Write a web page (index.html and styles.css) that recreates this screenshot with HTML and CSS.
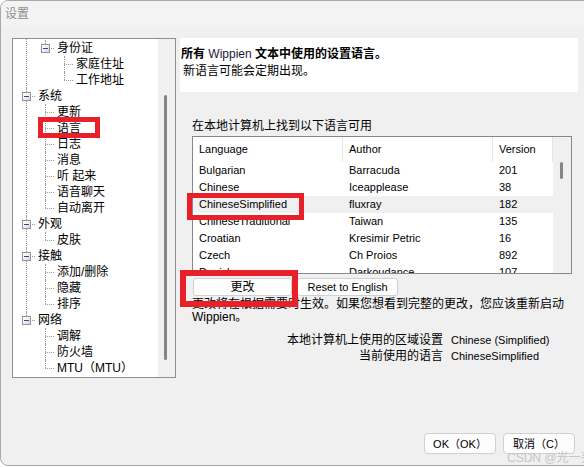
FILE: index.html
```html
<!DOCTYPE html>
<html lang="zh-CN">
<head>
<meta charset="utf-8">
<title>设置</title>
<link rel="stylesheet" href="styles.css">
</head>
<body>
<div class="window">
  <div class="titlebar"><span class="title">设置</span></div>
  <div class="main">
    <div class="tree">
      <div class="tree-view">
        <ul class="tree-root">
          <li class="node">
            <div class="row"><span class="exp"></span></div>
            <ul class="sub">
              <li class="node last">
                <div class="row"><span class="exp"></span><span class="label">身份证</span></div>
                <ul class="sub">
                  <li><div class="row"><span class="label">家庭住址</span></div></li>
                  <li class="last"><div class="row"><span class="label">工作地址</span></div></li>
                </ul>
              </li>
            </ul>
          </li>
          <li class="node">
            <div class="row"><span class="exp"></span><span class="label">系统</span></div>
            <ul class="sub">
              <li><div class="row"><span class="label">更新</span></div></li>
              <li><div class="row"><span class="label">语言</span></div></li>
              <li><div class="row"><span class="label">日志</span></div></li>
              <li><div class="row"><span class="label">消息</span></div></li>
              <li><div class="row"><span class="label">听 起来</span></div></li>
              <li><div class="row"><span class="label">语音聊天</span></div></li>
              <li class="last"><div class="row"><span class="label">自动离开</span></div></li>
            </ul>
          </li>
          <li class="node">
            <div class="row"><span class="exp"></span><span class="label">外观</span></div>
            <ul class="sub">
              <li class="last"><div class="row"><span class="label">皮肤</span></div></li>
            </ul>
          </li>
          <li class="node">
            <div class="row"><span class="exp"></span><span class="label">接触</span></div>
            <ul class="sub">
              <li><div class="row"><span class="label">添加/删除</span></div></li>
              <li><div class="row"><span class="label">隐藏</span></div></li>
              <li class="last"><div class="row"><span class="label">排序</span></div></li>
            </ul>
          </li>
          <li class="node last">
            <div class="row"><span class="exp"></span><span class="label">网络</span></div>
            <ul class="sub">
              <li><div class="row"><span class="label">调解</span></div></li>
              <li><div class="row"><span class="label">防火墙</span></div></li>
              <li class="last"><div class="row"><span class="label">MTU（MTU）</span></div></li>
            </ul>
          </li>
        </ul>
      </div>
      <div class="tree-scroll"><div class="tree-thumb"></div></div>
    </div>

    <div class="panel">
      <div class="banner">
        <div class="banner-title">所有 <span class="latin">Wippien</span> 文本中使用的设置语言。</div>
        <div class="banner-sub">新语言可能会定期出现。</div>
      </div>
      <div class="caption">在本地计算机上找到以下语言可用</div>
      <div class="listview">
        <div class="lv-body">
          <div class="lv-head"><div>Language</div><div>Author</div><div>Version</div></div>
          <div class="lv-row"><div>Bulgarian</div><div>Barracuda</div><div>201</div></div>
          <div class="lv-row"><div>Chinese</div><div>Iceapplease</div><div>38</div></div>
          <div class="lv-row sel"><div>ChineseSimplified</div><div>fluxray</div><div>182</div></div>
          <div class="lv-row"><div>ChineseTraditional</div><div>Taiwan</div><div>135</div></div>
          <div class="lv-row"><div>Croatian</div><div>Kresimir Petric</div><div>16</div></div>
          <div class="lv-row"><div>Czech</div><div>Ch Proios</div><div>892</div></div>
          <div class="lv-row"><div>Danish</div><div>Darkoudance</div><div>107</div></div>
        </div>
        <div class="lv-scroll"><div class="lv-thumb"></div></div>
      </div>
      <div class="actions">
        <button class="btn btn-change">更改</button>
        <button class="btn btn-reset">Reset to English</button>
      </div>
      <p class="note">更改将在根据需要时生效。如果您想看到完整的更改，您应该重新启动Wippien。</p>
      <div class="locale">
        <div class="lk">本地计算机上使用的区域设置</div><div class="lv">Chinese (Simplified)</div>
        <div class="lk">当前使用的语言</div><div class="lv">ChineseSimplified</div>
      </div>
    </div>
  </div>
  <div class="footer">
    <button class="btn dlg">OK（OK）</button>
    <button class="btn dlg">取消（C）</button>
  </div>

  <div class="mark mark-tree"></div>
  <div class="mark mark-row"></div>
  <div class="mark mark-btn"></div>
  <div class="watermark">CSDN @光一亮</div>
</div>
</body>
</html>
```

FILE: styles.css
```css
* { box-sizing: border-box; }

html, body {
  margin: 0;
  padding: 0;
  overflow: hidden;
}

body {
  background: #ffffff;
  font-family: "Liberation Sans", "Noto Sans CJK SC", sans-serif;
  font-size: 12px;
  color: #000;
  width: 584px;
  height: 467px;
}

.window {
  position: relative;
  width: 586px;
  height: 466px;
  border: 1px solid #a9a9a9;
  border-radius: 8px 0 0 8px;
  background: #f0f0f0;
  display: flex;
  flex-direction: column;
  overflow: hidden;
}

.titlebar {
  height: 26px;
  flex: none;
  background: #f3f3f3;
  display: flex;
  align-items: center;
  padding-left: 4px;
}

.title {
  color: #8f8f8f;
  font-size: 12px;
  line-height: 16px;
}

.main {
  display: flex;
  gap: 4px;
  padding: 11px 0 0 11px;
  flex: none;
}

/* ---------- tree ---------- */
.tree {
  width: 164px;
  height: 340px;
  border: 1px solid #8e8f8f;
  background: #fff;
  display: flex;
  overflow: hidden;
  flex: none;
}

.tree-view {
  width: 145px;
  overflow: hidden;
}

.tree-root,
.tree-root ul {
  list-style: none;
  padding: 0;
}

.tree-root {
  margin: -15px 0 0 0;
}

.tree-root ul.sub {
  margin: 0 0 0 19px;
}

.tree-root li {
  position: relative;
}

.tree-root li::after {
  content: "";
  position: absolute;
  left: 13px;
  top: 0;
  bottom: 0;
  border-left: 1px dotted #9a9a9a;
}

.tree-root li.last::after {
  bottom: auto;
  height: 8px;
}

.tree-root li::before {
  content: "";
  position: absolute;
  left: 13px;
  top: 8px;
  width: 9px;
  border-top: 1px dotted #9a9a9a;
}

.row {
  height: 16px;
  line-height: 16px;
  padding-left: 25px;
  white-space: nowrap;
  font-size: 12px;
}

.exp {
  position: absolute;
  left: 9px;
  top: 4px;
  width: 9px;
  height: 9px;
  border: 1px solid #939393;
  background: linear-gradient(135deg, #ffffff 0%, #f0f0f0 50%, #d4d4d4 100%);
  z-index: 1;
}

.exp::after {
  content: "";
  position: absolute;
  left: 1px;
  top: 3px;
  width: 5px;
  height: 1px;
  background: #2b48a6;
}

.tree-scroll {
  width: 17px;
  background: #f0f0f0;
}

.tree-thumb {
  width: 3px;
  height: 265px;
  margin: 56px 0 0 6px;
  background: #858585;
  border-radius: 2px;
}

/* ---------- right panel ---------- */
.panel {
  width: 398px;
  flex: none;
  display: flex;
  flex-direction: column;
}

.banner {
  height: 54px;
  background: #fff;
  padding: 8px 0 0 1px;
}

.banner-title {
  font-weight: bold;
  line-height: 17px;
  font-size: 12px;
}

.banner-title .latin {
  font-weight: normal;
  color: #1b1b3a;
}

.banner-sub {
  line-height: 17px;
  padding-left: 2px;
}

.caption {
  margin: 26px 0 0 12px;
  line-height: 17px;
}

.listview {
  margin: 1px 0 0 12px;
  width: 380px;
  height: 138px;
  border: 1px solid #828790;
  background: #fff;
  display: flex;
  overflow: hidden;
}

.lv-body {
  width: 360px;
  font-size: 11px;
  flex: none;
}

.lv-head,
.lv-row {
  display: grid;
  grid-template-columns: 150px 150px 60px;
}

.lv-head {
  height: 25px;
}

.lv-head > div {
  border-right: 1px solid #e5e5e5;
  padding-left: 6px;
  line-height: 25px;
}

.lv-row {
  height: 17px;
  line-height: 17px;
}

.lv-row > div {
  padding-left: 6px;
  white-space: nowrap;
  overflow: hidden;
}

.lv-row.sel {
  background: #f0f0f0;
}

.lv-scroll {
  width: 18px;
  background: #f0f0f0;
  flex: none;
}

.lv-thumb {
  width: 3px;
  height: 17px;
  margin: 25px 0 0 7px;
  background: #858585;
  border-radius: 2px;
}

.actions {
  display: flex;
  gap: 5px;
  margin: 4px 0 0 13px;
}

.btn {
  font-family: "Liberation Sans", "Noto Sans CJK SC", sans-serif;
  font-size: 12px;
  color: #000;
  background: #fdfdfd;
  border: 1px solid #d0d0d0;
  border-radius: 3px;
  padding: 0;
  margin: 0;
  line-height: 16px;
}

.btn-change {
  width: 99px;
  height: 18px;
}

.btn-reset {
  width: 101px;
  height: 18px;
  font-size: 11px;
}

.note {
  margin: 2px 0 0 12px;
  width: 380px;
  line-height: 13px;
  font-size: 12px;
}

.locale {
  display: grid;
  grid-template-columns: 263px auto;
  column-gap: 8px;
  margin-top: 8px;
  line-height: 16px;
}

.lk {
  text-align: right;
}

.lv {
  font-size: 11px;
}

/* ---------- footer ---------- */
.footer {
  margin-top: auto;
  display: flex;
  justify-content: flex-end;
  gap: 7px;
  padding: 0 10px 11px 0;
}

.dlg {
  width: 72px;
  height: 21px;
  border-radius: 4px;
  font-size: 11px;
}

/* ---------- annotations ---------- */
.mark {
  position: absolute;
  border: 5px solid #e8202a;
  z-index: 5;
}

.mark-tree {
  left: 37px;
  top: 116px;
  width: 62px;
  height: 21px;
}

.mark-row {
  left: 186px;
  top: 192px;
  width: 117px;
  height: 27px;
}

.mark-btn {
  left: 179px;
  top: 269px;
  width: 118px;
  height: 37px;
  border-width: 6px;
}

.watermark {
  position: absolute;
  left: 506px;
  top: 450px;
  font-size: 12px;
  line-height: 14px;
  color: #c6c6c6;
  white-space: nowrap;
  z-index: 6;
}
```
